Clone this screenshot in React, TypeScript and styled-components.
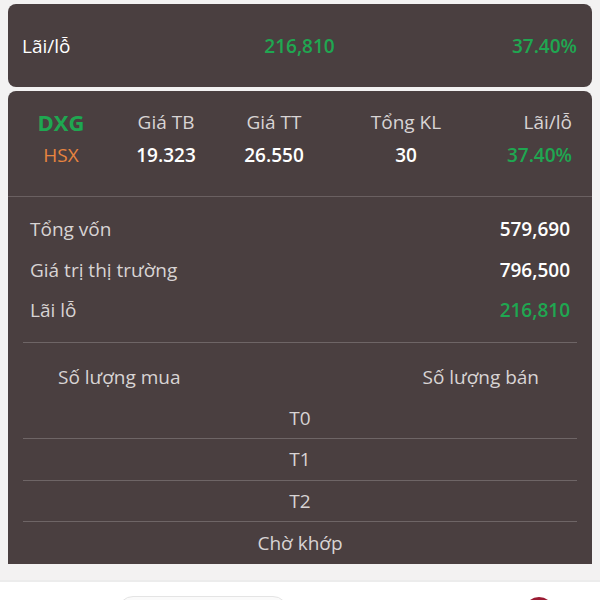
import React from "react";
import styled, { createGlobalStyle } from "styled-components";

const Global = createGlobalStyle`
  html, body { margin: 0; padding: 0; background: #ffffff; }
  body { font-family: "Open Sans", "Noto Sans", sans-serif; }
`;

const Page = styled.div`
  width: 600px;
  height: 600px;
  overflow: hidden;
  display: flex;
  flex-direction: column;
`;

const Panel = styled.div`
  background: #f3f2f2;
  padding: 4px 8px 16px 8px;
  display: flex;
  flex-direction: column;
  gap: 4px;
  border-bottom: 2px solid #ececec;
`;

const Card = styled.div<{ $open?: boolean }>`
  background: #4a3f40;
  border-radius: ${(p) => (p.$open ? "8px 8px 0 0" : "8px")};
  color: #ffffff;
`;

const SummaryRow = styled.div`
  height: 83px;
  display: grid;
  grid-template-columns: 1fr auto 1fr;
  align-items: center;
  padding: 0 15px 0 14px;
  font-size: 19px;
`;

const Green = styled.span<{ $bold?: boolean }>`
  color: #1fa751;
  font-weight: ${(p) => (p.$bold ? 600 : 400)};
`;

const Right = styled.div`
  text-align: right;
`;

const Head = styled.div`
  display: grid;
  grid-template-columns: 78px 132px 84px 180px 1fr;
  grid-template-rows: 33px 33px;
  padding: 14px 20px 25px 14px;
  font-size: 19px;
  align-items: center;
  border-bottom: 1px solid #6a6061;
`;

const Cell = styled.div<{ $align?: string; $color?: string; $weight?: number; $size?: number }>`
  text-align: ${(p) => p.$align || "center"};
  color: ${(p) => p.$color || "#d8d4d4"};
  font-weight: ${(p) => p.$weight || 400};
  font-size: ${(p) => (p.$size ? p.$size + "px" : "inherit")};
  white-space: nowrap;
`;

const Details = styled.div`
  padding: 12px 22px 11px 22px;
  display: flex;
  flex-direction: column;
`;

const DetailRow = styled.div`
  display: flex;
  justify-content: space-between;
  align-items: center;
  height: 40.5px;
  font-size: 19px;
`;

const Label = styled.span`
  color: #d8d4d4;
`;

const Value = styled.span<{ $green?: boolean }>`
  color: ${(p) => (p.$green ? "#1fa751" : "#ffffff")};
  font-weight: 600;
`;

const Sep = styled.div`
  height: 1px;
  background: #6e6566;
  margin: 0 15px;
`;

const Orders = styled.div`
  padding: 0 15px;
  display: flex;
  flex-direction: column;
`;

const OrderHead = styled.div`
  display: flex;
  justify-content: space-between;
  height: 55px;
  padding: 13px 38px 0 35px;
  box-sizing: border-box;
  font-size: 19px;
  color: #d8d4d4;
  line-height: 42px;
`;

const OrderRow = styled.div<{ $line?: boolean }>`
  height: 41.5px;
  box-sizing: border-box;
  display: flex;
  align-items: center;
  justify-content: center;
  font-size: 19px;
  color: #d8d4d4;
  border-bottom: ${(p) => (p.$line ? "1px solid #6e6566" : "none")};
`;

const OrderList = styled.div`
  display: flex;
  flex-direction: column;
`;

const Bottom = styled.div`
  flex: 1;
  position: relative;
  background: #ffffff;
`;

const Pill = styled.div`
  position: absolute;
  left: 118px;
  top: 14px;
  width: 168px;
  height: 30px;
  border-radius: 15px;
  border: 1px solid #e4e4e4;
  background: #fafafa;
`;

const Dot = styled.div`
  position: absolute;
  left: 524px;
  top: 15px;
  width: 30px;
  height: 30px;
  border-radius: 50%;
  background: #9a1a32;
`;

export default function App() {
  return (
    <Page>
      <Global />
      <Panel>
        <Card>
          <SummaryRow>
            <span>Lãi/lỗ</span>
            <Green $bold>216,810</Green>
            <Right>
              <Green $bold>37.40%</Green>
            </Right>
          </SummaryRow>
        </Card>
        <Card $open>
          <Head>
            <Cell $color="#1fa751" $weight={700} $size={22}>DXG</Cell>
            <Cell>Giá TB</Cell>
            <Cell>Giá TT</Cell>
            <Cell>Tổng KL</Cell>
            <Cell $align="right">Lãi/lỗ</Cell>
            <Cell $color="#e8843f">HSX</Cell>
            <Cell $color="#ffffff" $weight={600}>19.323</Cell>
            <Cell $color="#ffffff" $weight={600}>26.550</Cell>
            <Cell $color="#ffffff" $weight={600}>30</Cell>
            <Cell $align="right" $color="#1fa751" $weight={600}>37.40%</Cell>
          </Head>
          <Details>
            <DetailRow>
              <Label>Tổng vốn</Label>
              <Value>579,690</Value>
            </DetailRow>
            <DetailRow>
              <Label>Giá trị thị trường</Label>
              <Value>796,500</Value>
            </DetailRow>
            <DetailRow>
              <Label>Lãi lỗ</Label>
              <Value $green>216,810</Value>
            </DetailRow>
          </Details>
          <Sep />
          <Orders>
            <OrderHead>
              <span>Số lượng mua</span>
              <span>Số lượng bán</span>
            </OrderHead>
            <OrderList>
              <OrderRow $line>T0</OrderRow>
              <OrderRow $line>T1</OrderRow>
              <OrderRow $line>T2</OrderRow>
              <OrderRow>Chờ khớp</OrderRow>
            </OrderList>
          </Orders>
        </Card>
      </Panel>
      <Bottom>
        <Pill />
        <Dot />
      </Bottom>
    </Page>
  );
}
